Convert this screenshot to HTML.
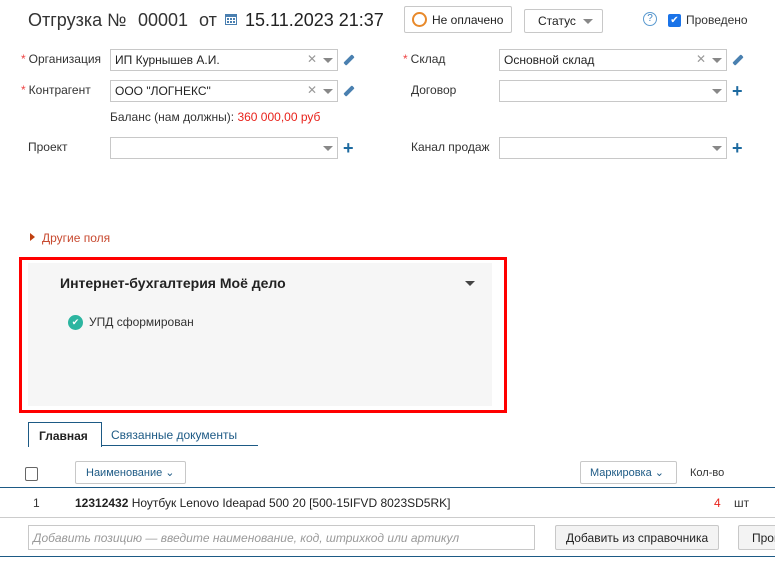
<!DOCTYPE html>
<html><head><meta charset="utf-8"><style>
*{box-sizing:border-box;margin:0;padding:0}
body{width:775px;height:563px;background:#fff;font-family:"Liberation Sans",Arial,sans-serif;font-size:12px;color:#333;position:relative;overflow:hidden}
.a{position:absolute;white-space:nowrap}
.inp{position:absolute;height:22px;border:1px solid #c8c8c8;background:#fff;font-size:12px;color:#222;padding:3px 4px}
.x{position:absolute;right:20px;top:2px;color:#999;font-size:12px}
.dd{position:absolute;right:4px;top:8px;width:0;height:0;border-left:5px solid transparent;border-right:5px solid transparent;border-top:5px solid #888}
.req{color:#e44;margin-right:3px}
.plus{position:absolute;color:#1d6aa0;font-size:18px;font-weight:bold;line-height:18px}
.pen{position:absolute;width:12px;height:4px;background:#4a80b0;transform:rotate(-45deg);border-radius:1px}
.btn{position:absolute;border:1px solid #c8c8c8;border-radius:2px;background:#fff;font-size:12px;color:#222}
.t{position:absolute;top:10px;font-size:18px;color:#333;white-space:nowrap}
</style></head><body>
<div class="t" style="left:28px">Отгрузка №</div>
<div class="t" style="left:138px">00001</div>
<div class="t" style="left:199px">от</div>
<svg class="a" style="left:225px;top:13px" width="12" height="12"><rect x="0.5" y="1.5" width="11" height="10" fill="none" stroke="#4a7fb0"/><rect x="0" y="1" width="12" height="3" fill="#4a7fb0"/><g fill="#4a7fb0"><rect x="2" y="5" width="2" height="2"/><rect x="5" y="5" width="2" height="2"/><rect x="8" y="5" width="2" height="2"/><rect x="2" y="8" width="2" height="2"/><rect x="5" y="8" width="2" height="2"/><rect x="8" y="8" width="2" height="2"/></g></svg>
<div class="t" style="left:245px;color:#222">15.11.2023 21:37</div>
<div class="btn" style="left:404px;top:6px;width:108px;height:27px"><span class="a" style="left:7px;top:5px;width:15px;height:15px;border:2px solid #e8892a;border-radius:50%"></span><span class="a" style="left:27px;top:6px">Не оплачено</span></div>
<div class="btn" style="left:524px;top:9px;width:79px;height:24px"><span class="a" style="left:13px;top:4px">Статус</span><span class="dd" style="right:9px;top:9px"></span></div>
<div class="a" style="left:643px;top:12px;width:14px;height:14px;border:1px solid #5a9ad0;border-radius:50%;color:#3a80c0;font-size:10px;text-align:center;line-height:12px">?</div>
<div class="a" style="left:668px;top:14px;width:13px;height:13px;background:#1a73e8;border-radius:2px;color:#fff;font-size:10px;text-align:center;line-height:13px">✔</div>
<div class="a" style="left:686px;top:13px">Проведено</div>

<div class="a" style="left:21px;top:52px"><span class="req">*</span>Организация</div>
<div class="inp" style="left:110px;top:49px;width:228px">ИП Курнышев А.И.<span class="x">✕</span><span class="dd"></span></div>
<div class="pen" style="left:343px;top:58px"></div>
<div class="a" style="left:21px;top:83px"><span class="req">*</span>Контрагент</div>
<div class="inp" style="left:110px;top:80px;width:228px">ООО "ЛОГНЕКС"<span class="x">✕</span><span class="dd"></span></div>
<div class="pen" style="left:343px;top:89px"></div>
<div class="a" style="left:110px;top:110px">Баланс (нам должны): <span style="color:#e8231c">360 000,00 руб</span></div>
<div class="a" style="left:28px;top:140px">Проект</div>
<div class="inp" style="left:110px;top:137px;width:228px"><span class="dd"></span></div>
<div class="plus" style="left:343px;top:139px">+</div>

<div class="a" style="left:403px;top:52px"><span class="req">*</span>Склад</div>
<div class="inp" style="left:499px;top:49px;width:228px">Основной склад<span class="x">✕</span><span class="dd"></span></div>
<div class="pen" style="left:732px;top:58px"></div>
<div class="a" style="left:411px;top:83px">Договор</div>
<div class="inp" style="left:499px;top:80px;width:228px"><span class="dd"></span></div>
<div class="plus" style="left:732px;top:82px">+</div>
<div class="a" style="left:411px;top:140px">Канал продаж</div>
<div class="inp" style="left:499px;top:137px;width:228px"><span class="dd"></span></div>
<div class="plus" style="left:732px;top:139px">+</div>

<div class="a" style="left:30px;top:233px;width:0;height:0;border-top:4px solid transparent;border-bottom:4px solid transparent;border-left:5px solid #c04010"></div>
<div class="a" style="left:42px;top:231px;color:#c84a30">Другие поля</div>

<div class="a" style="left:19px;top:257px;width:488px;height:156px;border:3px solid #f00"></div>
<div class="a" style="left:28px;top:263px;width:464px;height:143px;background:#f6f6f6"></div>
<div class="a" style="left:60px;top:275px;font-size:14px;font-weight:bold;color:#222">Интернет-бухгалтерия Моё дело</div>
<div class="a" style="left:465px;top:281px;width:0;height:0;border-left:5px solid transparent;border-right:5px solid transparent;border-top:5px solid #444"></div>
<div class="a" style="left:68px;top:315px;width:15px;height:15px;background:#2cb5a0;border-radius:50%;color:#fff;font-size:9px;text-align:center;line-height:15px">✔</div>
<div class="a" style="left:89px;top:315px">УПД сформирован</div>

<div class="a" style="left:28px;top:422px;width:74px;height:25px;border:1px solid #1d5a85;border-bottom:none;background:#fff;padding:6px 0 0 10px;font-weight:bold;font-size:12px;color:#222">Главная</div>
<div class="a" style="left:102px;top:445px;width:156px;height:1px;background:#1d5a85"></div>
<div class="a" style="left:111px;top:428px;color:#1d5a85">Связанные документы</div>

<div class="a" style="left:25px;top:467px;width:13px;height:14px;border:1px solid #666;border-radius:2px"></div>
<div class="btn" style="left:75px;top:461px;width:111px;height:23px"><span class="a" style="left:10px;top:4px;color:#1d5a85;font-size:11px">Наименование ⌄</span></div>
<div class="btn" style="left:580px;top:461px;width:97px;height:23px"><span class="a" style="left:9px;top:4px;color:#1d5a85;font-size:11px">Маркировка ⌄</span></div>
<div class="a" style="left:690px;top:467px;font-size:11px">Кол-во</div>
<div class="a" style="left:0;top:487px;width:775px;height:1px;background:#1d5a85"></div>
<div class="a" style="left:33px;top:496px;font-size:12px">1</div>
<div class="a" style="left:75px;top:496px;font-size:12px;color:#222"><b>12312432</b> Ноутбук Lenovo Ideapad 500 20 [500-15IFVD 8023SD5RK]</div>
<div class="a" style="left:714px;top:496px;color:#e8231c">4</div>
<div class="a" style="left:734px;top:496px">шт</div>
<div class="a" style="left:0;top:517px;width:775px;height:1px;background:#ccc"></div>
<div class="inp" style="left:28px;top:525px;width:507px;height:25px;color:#999;font-style:italic;padding-top:5px">Добавить позицию — введите наименование, код, штрихкод или артикул</div>
<div class="btn" style="left:555px;top:525px;width:164px;height:25px;background:#f3f3f3"><span class="a" style="left:10px;top:5px">Добавить из справочника</span></div>
<div class="btn" style="left:738px;top:525px;width:60px;height:25px;background:#f3f3f3"><span class="a" style="left:13px;top:5px">Пров</span></div>
<div class="a" style="left:0;top:556px;width:775px;height:1px;background:#1d5a85"></div>
</body></html>
